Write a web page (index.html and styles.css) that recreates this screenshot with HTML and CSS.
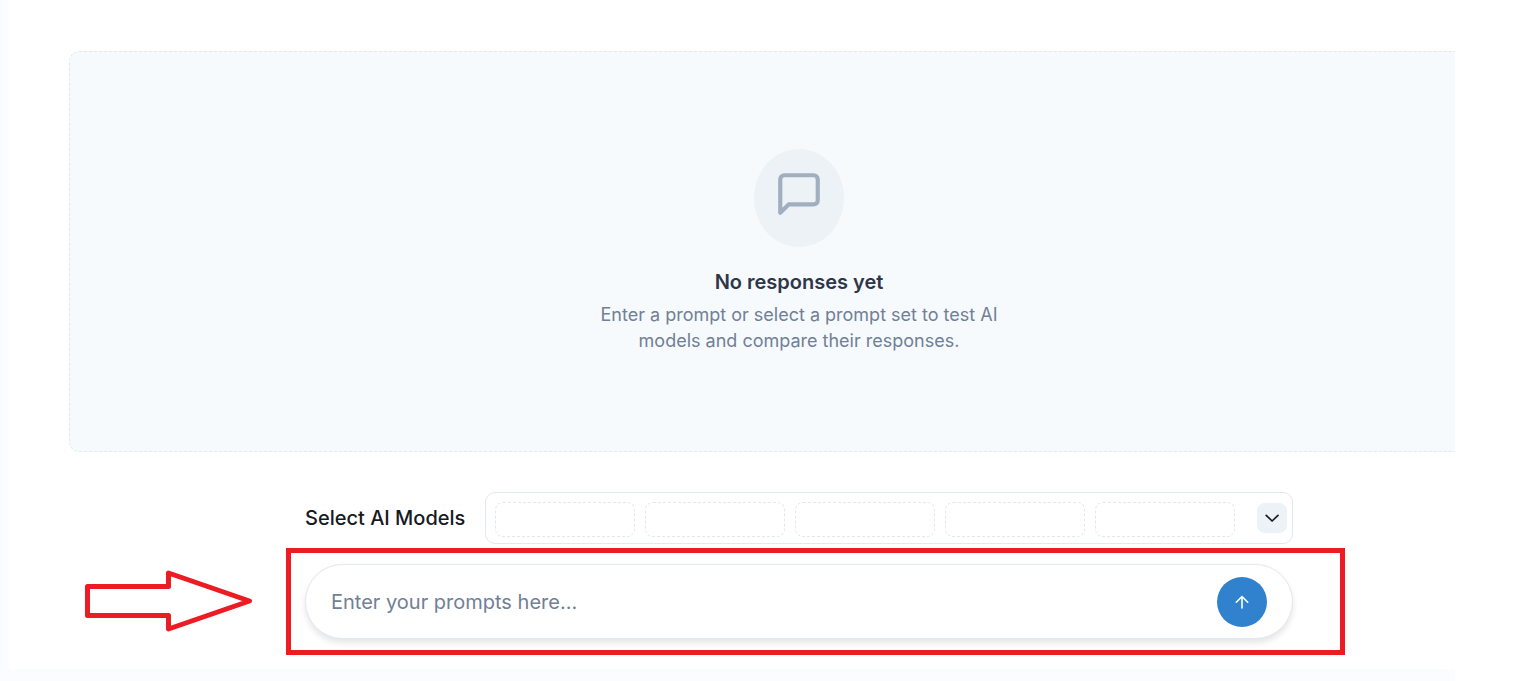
FILE: index.html
```html
<!DOCTYPE html>
<html lang="en">
<head>
    <meta charset="utf-8">
    <meta name="viewport" content="width=device-width, initial-scale=1">
    <title>Playground</title>
    <link rel="stylesheet" href="styles.css">
</head>
<body>

<div class="app">
    <main class="content">
        <div class="inner">
            <section class="empty-state">
                <div class="empty-icon">
                    <svg width="50" height="50" viewBox="0 0 24 24" fill="none" stroke="currentColor" stroke-width="2" stroke-linecap="round" stroke-linejoin="round">
                        <path d="M21 15a2 2 0 0 1-2 2H7l-4 4V5a2 2 0 0 1 2-2h14a2 2 0 0 1 2 2z"/>
                    </svg>
                </div>
                <h2>No responses yet</h2>
                <p>Enter a prompt or select a prompt set to test AI models and compare their responses.</p>
            </section>

            <form class="composer">
                <div class="models">
                    <span class="models-label" id="models-label">Select AI Models</span>
                    <div class="model-select" role="group" aria-labelledby="models-label">
                        <div class="slots">
                            <div class="slot"></div>
                            <div class="slot"></div>
                            <div class="slot"></div>
                            <div class="slot"></div>
                            <div class="slot"></div>
                        </div>
                        <button type="button" class="toggle" aria-label="Show models">
                            <svg width="20" height="20" viewBox="0 0 20 20" fill="none" stroke="currentColor" stroke-width="1.7" stroke-linecap="round" stroke-linejoin="round">
                                <path d="M4.200 7.300l5.900 5.700 5.900-5.700"/>
                            </svg>
                        </button>
                    </div>
                </div>

                <div class="prompt">
                    <input type="text" class="prompt-input" placeholder="Enter your prompts here..." aria-label="Prompt">
                    <button type="button" class="send" aria-label="Send">
                        <svg width="20" height="20" viewBox="0 0 20 20" fill="none" stroke="currentColor" stroke-width="1.6" stroke-linecap="round" stroke-linejoin="round">
                            <path d="M10 16V4.600M4.300 10.200L10 4.500l5.700 5.700"/>
                        </svg>
                    </button>
                    <div class="highlight"></div>
                    <svg class="pointer" width="168" height="64" viewBox="0 0 168 64" fill="none" stroke="currentColor" stroke-width="5" stroke-linejoin="round">
                        <path d="M2.500 17.500H83.500V4L164.500 32 83.500 60V46.500H2.500Z"/>
                    </svg>
                </div>
            </form>
        </div>
    </main>
</div>

</body>
</html>
```

FILE: styles.css
```css
* {box-sizing: border-box;}

body {
    margin: 0;
    background-color: white;
    color: #171923;
    font-family: Inter, "Liberation Sans", sans-serif;
}

.app {
    margin-right: 69px;
    padding: 0 0 12px 9px;
    min-height: 100vh;
    background-color: #fbfcff;
    display: flex;
    overflow: hidden;
}

.content {
    flex: 1;
    min-width: 0;
    padding: 51px 0 30px 60px;
    background-color: white;
}

/* The panel runs past the right edge and gets cut off there */
.inner {
    margin-right: -74px;
}

/* Empty state */
.empty-state {
    display: flex;
    flex-direction: column;
    align-items: center;
    padding: 97px 20px;
    border: 1px dashed #e2e8f0;
    border-radius: 10px;
    background-color: #f6fafd;
    text-align: center;
}

.empty-icon {
    width: 90px;
    height: 98px;
    padding: 20px;
    border-radius: 50%;
    background-color: #edf2f7;
    color: #a0aec0;
}

.empty-state h2 {
    margin: 20px 0 5px;
    font-size: 20px;
    font-weight: 600;
    line-height: 30px;
    color: #2d3748;
}

.empty-state p {
    max-width: 400px;
    margin: 0;
    font-size: 18px;
    line-height: 26px;
    color: #718096;
}

/* Model picker and prompt box */
.composer {
    max-width: 988px;
    margin: 40px auto 0;
}

.models {
    display: flex;
    align-items: center;
    gap: 20px;
    margin-bottom: 20px;
}

.models-label {
    font-size: 20px;
    font-weight: 500;
    line-height: 30px;
    white-space: nowrap;
}

.model-select {
    flex: 1;
    display: flex;
    align-items: center;
    justify-content: space-between;
    padding: 0 5px 0 9px;
    border: 1px solid #e2e8f0;
    border-radius: 10px;
}

.slots {
    display: flex;
    gap: 10px;
    padding: 9px 0 6px;
}

.slot {
    width: 140px;
    height: 35px;
    border: 1px dashed #e2e8f0;
    border-radius: 8px;
}

.toggle {
    display: flex;
    align-items: center;
    justify-content: center;
    width: 30px;
    height: 30px;
    padding: 0;
    border: none;
    border-radius: 8px;
    background-color: #edf2f7;
    color: #171923;
    cursor: pointer;
}

.prompt {
    position: relative;
    display: flex;
    align-items: center;
    gap: 20px;
    padding: 12px 25px 11px;
    border: 1px solid #e2e8f0;
    border-radius: 40px;
    background-color: white;
    box-shadow: 0 4px 6px rgba(0, 0, 0, 0.1);
}

.prompt-input {
    flex: 1;
    min-width: 0;
    padding: 0;
    border: none;
    outline: none;
    background: none;
    font-family: inherit;
    font-size: 20px;
    line-height: 30px;
    color: #171923;
}

.prompt-input::placeholder {
    color: #718096;
    opacity: 1;
}

.send {
    display: flex;
    align-items: center;
    justify-content: center;
    width: 50px;
    height: 50px;
    padding: 0;
    border: none;
    border-radius: 50%;
    background-color: #3182ce;
    color: white;
    cursor: pointer;
}

/* Red box and arrow over the prompt */
.highlight {
    position: absolute;
    top: -17px;
    right: -53px;
    bottom: -17px;
    left: -20px;
    border: 5px solid #ed1c24;
    pointer-events: none;
}

.pointer {
    position: absolute;
    top: 4px;
    left: -221px;
    color: #ed1c24;
    pointer-events: none;
}
```
